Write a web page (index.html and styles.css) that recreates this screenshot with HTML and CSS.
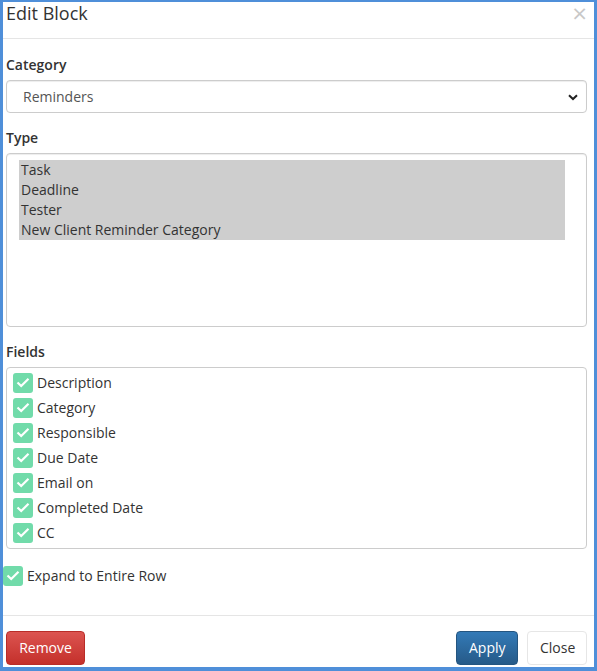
FILE: index.html
```html
<!DOCTYPE html>
<html>
<head>
<meta charset="utf-8">
<link rel="stylesheet" href="styles.css">
</head>
<body>
<div class="frame">
  <div class="header">
    <h4 class="title">Edit Block</h4>
    <span class="close-x">&times;</span>
  </div>
  <div class="body">
    <label class="lbl">Category</label>
    <div class="select">
      <span>Reminders</span>
      <svg class="chev" width="10" height="7" viewBox="0 0 10 7"><path d="M1 1.2 L5 5 L9 1.2" fill="none" stroke="#222" stroke-width="2"/></svg>
    </div>
    <label class="lbl">Type</label>
    <div class="listbox">
      <div class="opt">Task</div>
      <div class="opt">Deadline</div>
      <div class="opt">Tester</div>
      <div class="opt">New Client Reminder Category</div>
    </div>
    <label class="lbl">Fields</label>
    <div class="fields">
      <div class="row"><span class="cb"><svg width="14" height="11" viewBox="0 0 14 11"><path d="M1.5 5.5 L5.2 9 L12.5 1.8" fill="none" stroke="#fff" stroke-width="2.2"/></svg></span>Description</div>
      <div class="row"><span class="cb"><svg width="14" height="11" viewBox="0 0 14 11"><path d="M1.5 5.5 L5.2 9 L12.5 1.8" fill="none" stroke="#fff" stroke-width="2.2"/></svg></span>Category</div>
      <div class="row"><span class="cb"><svg width="14" height="11" viewBox="0 0 14 11"><path d="M1.5 5.5 L5.2 9 L12.5 1.8" fill="none" stroke="#fff" stroke-width="2.2"/></svg></span>Responsible</div>
      <div class="row"><span class="cb"><svg width="14" height="11" viewBox="0 0 14 11"><path d="M1.5 5.5 L5.2 9 L12.5 1.8" fill="none" stroke="#fff" stroke-width="2.2"/></svg></span>Due Date</div>
      <div class="row"><span class="cb"><svg width="14" height="11" viewBox="0 0 14 11"><path d="M1.5 5.5 L5.2 9 L12.5 1.8" fill="none" stroke="#fff" stroke-width="2.2"/></svg></span>Email on</div>
      <div class="row"><span class="cb"><svg width="14" height="11" viewBox="0 0 14 11"><path d="M1.5 5.5 L5.2 9 L12.5 1.8" fill="none" stroke="#fff" stroke-width="2.2"/></svg></span>Completed Date</div>
      <div class="row"><span class="cb"><svg width="14" height="11" viewBox="0 0 14 11"><path d="M1.5 5.5 L5.2 9 L12.5 1.8" fill="none" stroke="#fff" stroke-width="2.2"/></svg></span>CC</div>
    </div>
    <div class="expand"><span class="cb"><svg width="14" height="11" viewBox="0 0 14 11"><path d="M1.5 5.5 L5.2 9 L12.5 1.8" fill="none" stroke="#fff" stroke-width="2.2"/></svg></span>Expand to Entire Row</div>
  </div>
  <div class="footer">
    <button class="btn btn-remove">Remove</button>
    <div class="right">
      <button class="btn btn-apply">Apply</button>
      <button class="btn btn-close">Close</button>
    </div>
  </div>
</div>
</body>
</html>
```

FILE: styles.css
```css
* { box-sizing: border-box; }
html, body { margin: 0; padding: 0; background: #fff; }
body {
  font-family: "Open Sans", "Liberation Sans", sans-serif;
  font-size: 14px;
  color: #333;
  width: 597px;
  height: 671px;
  overflow: hidden;
}
.frame {
  width: 597px;
  height: 671px;
  border-style: solid;
  border-color: #4f8fd9;
  border-width: 2px 3px 4px 3px;
  display: flex;
  flex-direction: column;
}
.header {
  height: 37px;
  border-bottom: 1px solid #e5e5e5;
  position: relative;
  padding: 0 3px;
}
.title {
  margin: 0;
  font-size: 18px;
  font-weight: 400;
  line-height: 22px;
  color: #333;
}
.close-x {
  position: absolute;
  right: 6px;
  top: 0;
  font-size: 20px;
  line-height: 22px;
  color: #c8c8c8;
  font-family: "DejaVu Sans", sans-serif;
}
.body {
  padding: 16px 7px 0 3px;
  display: flex;
  flex-direction: column;
  height: 577px;
  border-bottom: 1px solid #e5e5e5;
}
.lbl {
  font-weight: 600;
  line-height: 20px;
  margin-bottom: 5px;
}
.select {
  height: 33px;
  border: 1px solid #ccc;
  border-radius: 4px;
  display: flex;
  align-items: center;
  justify-content: space-between;
  padding: 0 8px 0 16px;
  color: #555;
  margin-bottom: 15px;
  box-shadow: inset 0 1px 1px rgba(0,0,0,.075);
}
.chev { margin-top: 1px; }
.listbox {
  height: 174px;
  border: 1px solid #ccc;
  border-radius: 4px;
  padding: 6px 21px 0 12px;
  margin-bottom: 15px;
  box-shadow: inset 0 1px 1px rgba(0,0,0,.075);
}
.opt {
  background: #cecece;
  line-height: 20px;
  height: 20px;
  padding-left: 2px;
  color: #333;
}
.fields {
  height: 182px;
  border: 1px solid #ccc;
  border-radius: 4px;
  padding: 2px 6px 0 6px;
}
.row {
  height: 25px;
  display: flex;
  align-items: center;
  line-height: 20px;
}
.cb {
  width: 20px;
  height: 20px;
  border-radius: 3px;
  background: #71dbaa;
  display: inline-flex;
  align-items: center;
  justify-content: center;
  margin-right: 4px;
  flex: none;
}
.expand {
  margin-top: 16px;
  display: flex;
  align-items: center;
  height: 21px;
  margin-left: -3px;
}
.expand .cb { margin-right: 4px; }
.footer {
  flex: 1;
  display: flex;
  justify-content: space-between;
  align-items: flex-start;
  padding: 15px 7px 0 3px;
}
.right { display: flex; gap: 9px; }
.btn {
  font-family: "Open Sans", "Liberation Sans", sans-serif;
  font-size: 14px;
  height: 34px;
  border-radius: 4px;
  padding: 0 12px;
  line-height: 20px;
  cursor: pointer;
}
.btn-remove {
  width: 79px;
  color: #fff;
  border: 1px solid #b92c28;
  background: linear-gradient(#dc5450, #c4302b);
}
.btn-apply {
  width: 62px;
  color: #fff;
  border: 1px solid #245580;
  background: linear-gradient(#337ab7, #265a88);
}
.btn-close {
  width: 60px;
  color: #333;
  border: 1px solid #e6e6e6;
  background: #fff;
}
```
